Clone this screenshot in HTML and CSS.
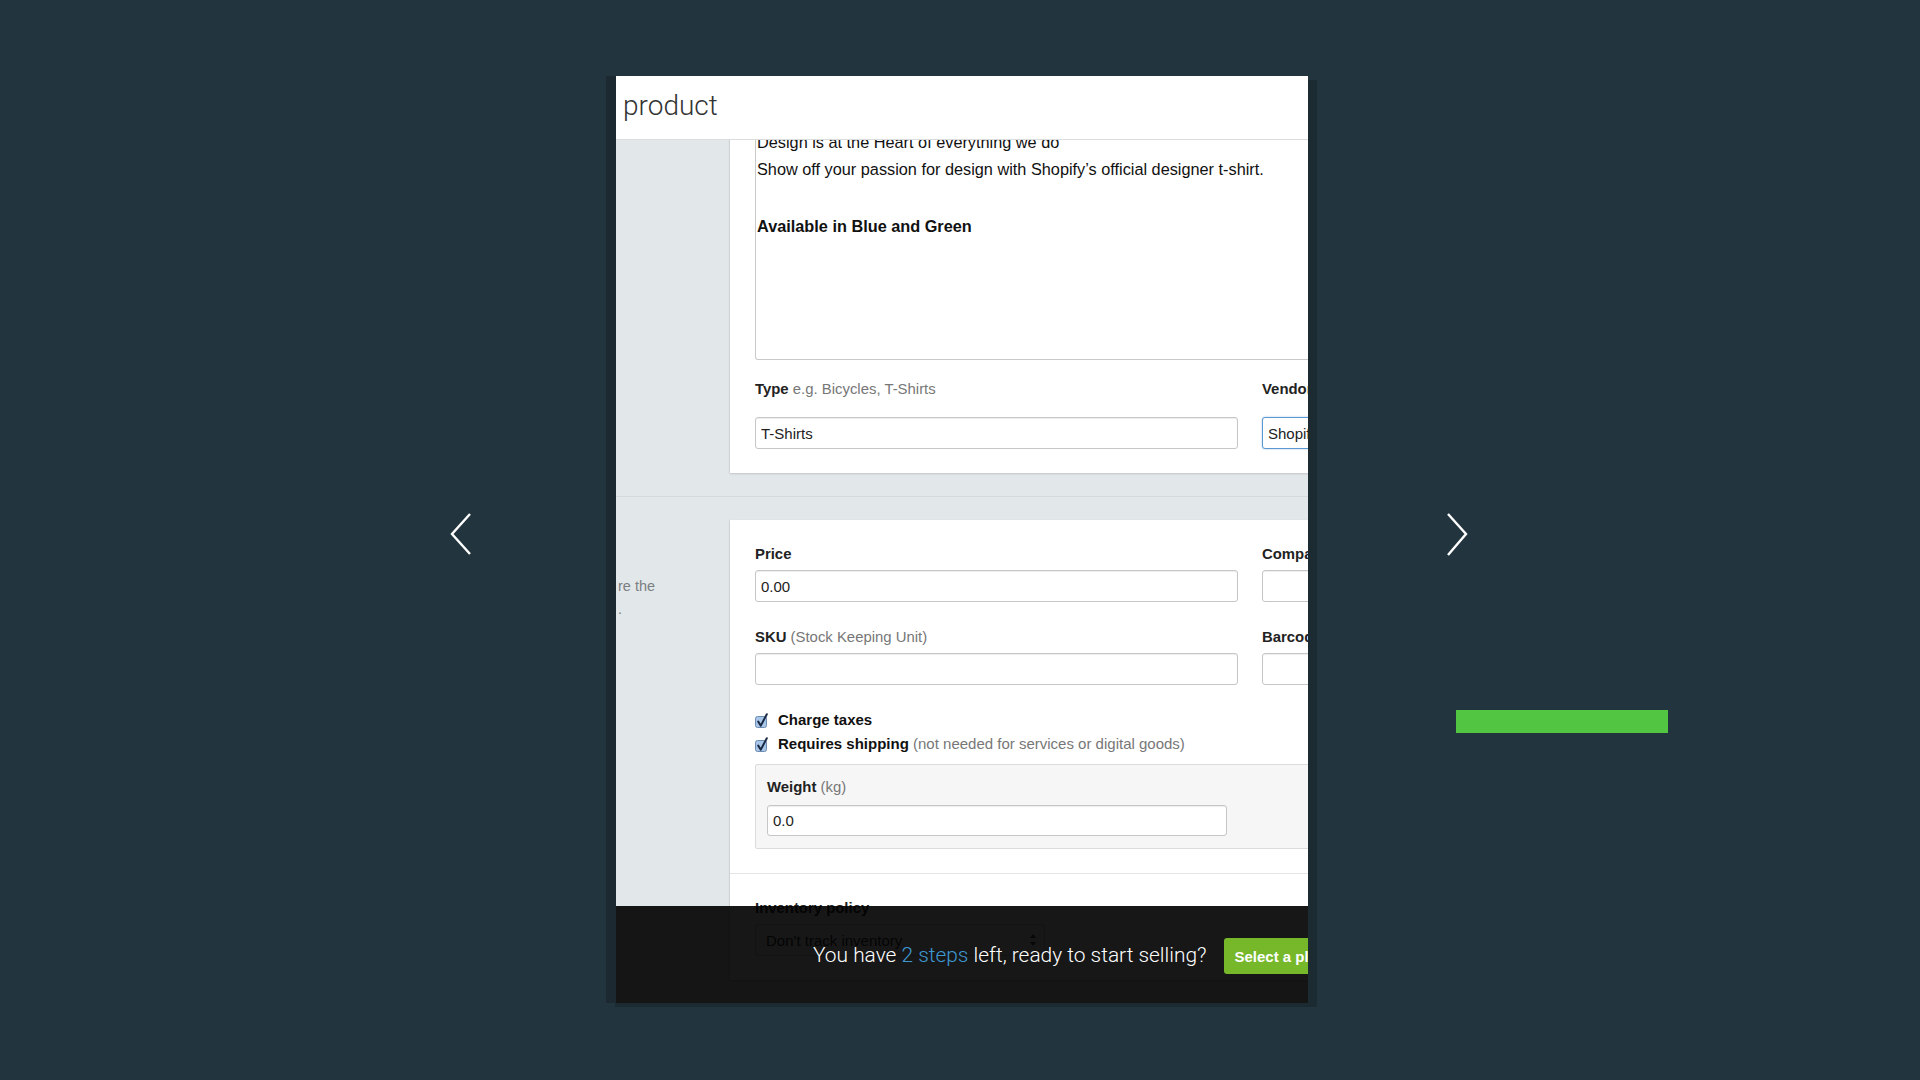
FILE: index.html
```html
<!DOCTYPE html>
<html lang="en">
<head>
  <meta charset="UTF-8"/>
  <meta name="viewport" content="width=device-width, initial-scale=1.0"/>
  <title>Add product</title>
  <link rel="stylesheet" href="styles.css">
</head>
<body>

<div class="stage">
  <div class="nav nav-prev">
    <svg width="24" height="44" viewBox="0 0 24 44"><polyline points="21,2 3,22 21,42"/></svg>
  </div>

  <div class="shot">
    <div class="window">
      <header class="topbar"><h1>product</h1></header>

      <div class="content">
        <section class="section section-first">
          <div class="section-aside"></div>
          <div class="card">
            <div class="card-section">
              <div class="editor">
                <p>Design is at the Heart of everything we do</p>
                <p>Show off your passion for design with Shopify’s official designer t-shirt.</p>
                <p class="editor-strong">Available in Blue and Green</p>
              </div>
              <div class="field-row field-row-loose">
                <div class="field">
                  <label>Type <span>e.g. Bicycles, T-Shirts</span></label>
                  <input type="text" value="T-Shirts">
                </div>
                <div class="field">
                  <label>Vendor <span>e.g. Apple, Samsung</span></label>
                  <input type="text" class="focused" value="Shopify">
                </div>
              </div>
            </div>
          </div>
        </section>

        <section class="section">
          <div class="section-aside">
            <p class="aside-text">re the<br>.</p>
          </div>
          <div class="card">
            <div class="card-section">
              <div class="field-row">
                <div class="field">
                  <label>Price</label>
                  <input type="text" value="0.00">
                </div>
                <div class="field">
                  <label>Compare at price</label>
                  <input type="text" value="">
                </div>
              </div>
              <div class="field-row">
                <div class="field">
                  <label>SKU <span>(Stock Keeping Unit)</span></label>
                  <input type="text" value="">
                </div>
                <div class="field">
                  <label>Barcode <span>(ISBN, UPC, GTIN, etc.)</span></label>
                  <input type="text" value="">
                </div>
              </div>

              <div class="checks">
                <div class="check">
                  <svg class="checkbox" width="14" height="15" viewBox="0 0 14 15"><rect x="0.5" y="3.5" width="11" height="11" rx="2"/><path d="M3.2 8.6 L5.8 12.6 L11.8 1.2"/></svg>
                  <span><b>Charge taxes</b></span>
                </div>
                <div class="check">
                  <svg class="checkbox" width="14" height="15" viewBox="0 0 14 15"><rect x="0.5" y="3.5" width="11" height="11" rx="2"/><path d="M3.2 8.6 L5.8 12.6 L11.8 1.2"/></svg>
                  <span><b>Requires shipping</b> <em>(not needed for services or digital goods)</em></span>
                </div>
              </div>

              <div class="weight-panel">
                <label>Weight <span>(kg)</span></label>
                <input type="text" value="0.0">
              </div>
            </div>

            <div class="card-section card-section-split">
              <label>Inventory policy</label>
              <div class="select">
                <span>Don't track inventory</span>
                <svg width="8" height="14" viewBox="0 0 8 14"><path d="M1 5 L4 1 L7 5 Z M1 9 L4 13 L7 9 Z"/></svg>
              </div>
            </div>
          </div>
        </section>
      </div>

      <div class="banner">
        <p>You have <span class="accent">2 steps</span> left, ready to start selling?</p>
        <button class="btn-plan">Select a plan</button>
      </div>
    </div>
  </div>

  <div class="nav nav-next">
    <svg width="24" height="44" viewBox="0 0 24 44"><polyline points="3,2 21,22 3,43"/></svg>
    <div class="progress"></div>
  </div>
</div>

</body>
</html>
```

FILE: styles.css
```css
body {
  margin: 0;
  background: #22343e;
  font-family: 'Liberation Sans', Arial, sans-serif;
}

.stage {
  display: grid;
  grid-template-columns: 606px 711px 1fr;
  height: 1080px;
  padding-top: 76px;
  box-sizing: border-box;
}

/* slider arrows */
.nav {
  display: flex;
  flex-direction: column;
}

.nav svg {
  margin-top: 436px;
  fill: none;
  stroke: #fff;
  stroke-width: 2.4;
}

.nav-prev {
  align-items: flex-end;
  padding-right: 133px;
}

.nav-next {
  align-items: flex-start;
  padding-left: 128px;
}

.progress {
  margin: 154px 0 0 11px;
  width: 212px;
  height: 23px;
  background: #52c542;
}

/* screenshot frame */
.shot {
  width: 692px;
  height: 927px;
  border-left: 10px solid #1c2930;
  box-shadow: 9px 4px 0 #1c2a31;
}

.window {
  position: relative;
  height: 100%;
  overflow: hidden;
  background: #e2e7ea;
}

.topbar {
  position: relative;
  z-index: 1;
  height: 63px;
  display: flex;
  align-items: center;
  padding-left: 7px;
  background: #fff;
  border-bottom: 1px solid #dadcdd;
}

.topbar h1 {
  margin: -4px 0 0;
  font-family: Roboto, 'Liberation Sans', sans-serif;
  font-weight: 300;
  font-size: 28px;
  color: #333;
}

.content {
  height: 863px;
  overflow: hidden;
}

.section {
  display: flex;
  padding: 23px 0;
  border-bottom: 1px solid #d5dadd;
}

.section-first {
  margin-top: -9px;
  padding-top: 0;
}

.section:last-child {
  border-bottom: none;
}

.section-aside {
  width: 114px;
  flex: none;
}

.aside-text {
  margin: 55px 0 0 2px;
  font-size: 14.5px;
  line-height: 23px;
  color: #7b7f82;
}

.card {
  flex: none;
  width: 1040px;
  background: #fff;
  box-shadow: 0 1px 2px rgba(0, 0, 0, 0.15), -1px 0 1px rgba(0, 0, 0, 0.04);
}

.card-section {
  padding: 24px 25px;
}

.section-first .card-section {
  padding-top: 0;
}

.card-section-split {
  border-top: 1px solid #e3e5e6;
}

.editor {
  border: 1px solid #c9c9c9;
  border-top: none;
  border-radius: 0 0 3px 3px;
  padding: 0 3px 122px 1px;
  font-size: 16.3px;
  line-height: 22px;
  color: #111;
}

.editor p {
  margin: 0;
}

.editor p + p {
  margin-top: 5px;
}

.editor .editor-strong {
  margin-top: 35px;
  font-weight: bold;
}

/* form fields */
.field-row {
  display: grid;
  grid-template-columns: 483px 483px;
  gap: 24px;
}

.field-row + .field-row {
  margin-top: 25px;
}

.field-row-loose {
  margin-top: 19px;
}

label {
  display: block;
  font-size: 14.9px;
  line-height: 20px;
  font-weight: bold;
  color: #222;
}

label span {
  font-weight: normal;
  color: #777;
}

input {
  display: block;
  box-sizing: border-box;
  width: 100%;
  height: 32px;
  margin-top: 6px;
  padding: 0 5px;
  border: 1px solid #c6c6c6;
  border-radius: 3px;
  box-shadow: inset 0 1px 1px rgba(0, 0, 0, 0.07);
  font-family: 'Liberation Sans', Arial, sans-serif;
  font-size: 15px;
  color: #222;
  background: #fff;
}

.field-row-loose input {
  margin-top: 18px;
}

input.focused {
  border-color: #5b98d2;
  box-shadow: 0 0 2px rgba(70, 140, 210, 0.5);
}

.checks {
  margin-top: 25px;
}

.check {
  display: flex;
  align-items: center;
  gap: 9px;
  font-size: 15px;
  line-height: 20px;
  color: #111;
}

.check + .check {
  margin-top: 4px;
}

.check em {
  font-style: normal;
  color: #777;
}

.checkbox rect {
  fill: #a9c6e8;
  stroke: #6c8db3;
}

.checkbox path {
  fill: none;
  stroke: #1b2b45;
  stroke-width: 2;
  stroke-linecap: round;
  stroke-linejoin: round;
}

.weight-panel {
  margin-top: 10px;
  padding: 12px 11px;
  border: 1px solid #dcdcdc;
  border-radius: 2px;
  background: #f6f6f6;
}

.weight-panel input {
  width: 460px;
  height: 31px;
  margin-top: 8px;
}

.select {
  box-sizing: border-box;
  width: 290px;
  height: 32px;
  margin-top: 6px;
  padding: 0 7px 0 10px;
  display: flex;
  align-items: center;
  justify-content: space-between;
  border: 1px solid #ccc;
  border-radius: 3px;
  font-size: 15px;
  color: #333;
  background: #fafafa;
}

.select svg {
  fill: #555;
}

/* onboarding banner over the page */
.banner {
  position: absolute;
  left: 0;
  right: 0;
  bottom: 0;
  z-index: 2;
  height: 97px;
  display: flex;
  align-items: center;
  gap: 17px;
  padding-left: 197px;
  background: rgba(0, 0, 0, 0.91);
}

.banner p {
  margin: 0;
  flex: none;
  font-family: Roboto, 'Liberation Sans', sans-serif;
  font-weight: 300;
  font-size: 20.9px;
  color: #fff;
}

.banner .accent {
  color: #3f97d2;
}

.btn-plan {
  flex: none;
  height: 36px;
  margin-top: 3px;
  padding: 0 14px 0 11px;
  border: none;
  border-radius: 3px;
  background: #76b82a;
  color: #fff;
  font-family: 'Liberation Sans', Arial, sans-serif;
  font-weight: bold;
  font-size: 15px;
  cursor: pointer;
}
```
